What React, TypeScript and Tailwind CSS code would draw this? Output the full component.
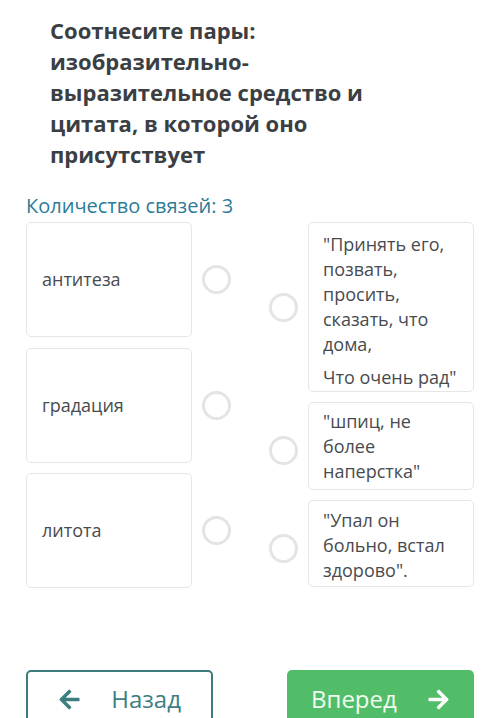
import React from "react";
import { FaArrowLeft, FaArrowRight } from "react-icons/fa";

const font = { fontFamily: '"Open Sans", "Noto Sans", sans-serif' };

const Dot: React.FC = () => (
  <span className="block w-[29px] h-[29px] rounded-full border-[3px] border-[#e4e4e4] bg-white shrink-0" />
);

const terms = ["антитеза", "градация", "литота"];

const App: React.FC = () => {
  return (
    <div className="w-[500px] h-[718px] bg-white overflow-hidden" style={font}>
      <h1 className="ml-[50px] w-[340px] pt-[15px] text-[22px] leading-[31px] font-bold text-[#3b3f44]">
        Соотнесите пары: изобразительно-выразительное средство и цитата, в которой оно присутствует
      </h1>

      <div className="px-[26px] mt-[23px] text-[20px] leading-[26px] text-[#2d7b96]">
        Количество связей: 3
      </div>

      <div className="flex px-[26px] mt-[3px] text-[18px] leading-[25px] text-[#474b4f]">
        {/* terms */}
        <div className="flex flex-col gap-[10.5px]">
          {terms.map((t) => (
            <div key={t} className="flex items-center">
              <div className="w-[166px] h-[115px] flex items-center px-[15px] border border-[#e6e6e6] rounded-[5px]">
                {t}
              </div>
              <div className="ml-[10px]">
                <Dot />
              </div>
            </div>
          ))}
        </div>

        {/* quotes */}
        <div className="flex flex-col gap-[10px] ml-auto">
          <div className="flex items-center">
            <div className="mr-[10px]">
              <Dot />
            </div>
            <div className="w-[166px] h-[170px] px-[14px] pt-[9px] border border-[#e6e6e6] rounded-[5px]">
              <p>"Принять его, позвать, просить, сказать, что дома,</p>
              <p className="mt-[8px]">Что очень рад"</p>
            </div>
          </div>
          <div className="flex items-center">
            <div className="mr-[10px] mt-[8px]">
              <Dot />
            </div>
            <div className="w-[166px] h-[88px] px-[14px] pt-[6px] border border-[#e6e6e6] rounded-[5px]">
              "шпиц, не более наперстка"
            </div>
          </div>
          <div className="flex items-center">
            <div className="mr-[10px] mt-[10px]">
              <Dot />
            </div>
            <div className="w-[166px] h-[87px] px-[14px] pt-[7px] border border-[#e6e6e6] rounded-[5px]">
              "Упал он больно, встал здорово".
            </div>
          </div>
        </div>
      </div>

      <div className="flex justify-between px-[26px] mt-[82px]">
        <button className="w-[187px] h-[58px] flex items-center justify-between pl-[30px] pr-[30px] border-2 border-[#3e7b7d] rounded-[5px] text-[24px] text-[#3c7e81]">
          <FaArrowLeft className="w-[23px] h-[23px]" />
          <span>Назад</span>
        </button>
        <button className="w-[187px] h-[58px] flex items-center justify-between px-[24px] bg-[#52bd69] rounded-[5px] text-[24px] text-[#effcef]">
          <span>Вперед</span>
          <FaArrowRight className="w-[23px] h-[23px] text-white" />
        </button>
      </div>
    </div>
  );
};

export default App;
